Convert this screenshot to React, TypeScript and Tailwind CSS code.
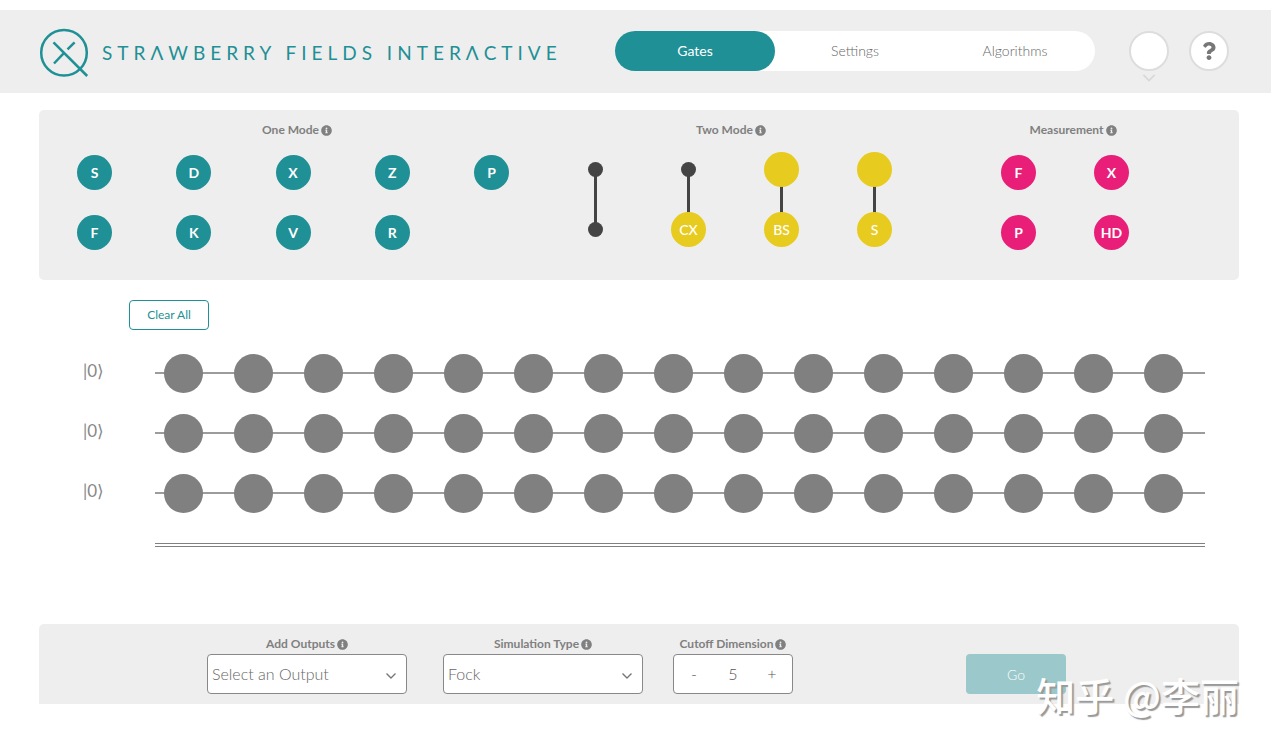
import { useState } from "react";
import type { ReactNode } from "react";
import { FaInfoCircle, FaQuestion } from "react-icons/fa";
import { clsx } from "clsx";

const tabs = ["Gates", "Settings", "Algorithms"];

// each inner array is one column of the palette
const oneMode = [["S", "F"], ["D", "K"], ["X", "V"], ["Z", "R"], ["P"]];
const measurement = [["F", "P"], ["X", "HD"]];

// an empty string is a plain disc, "dot" is a small control node
const twoMode = [
  { name: "Control phase", top: "dot", bottom: "dot" },
  { name: "Controlled X", top: "dot", bottom: "CX" },
  { name: "Beamsplitter", top: "", bottom: "BS" },
  { name: "Two-mode squeezing", top: "", bottom: "S" },
];

const SLOTS = 15;
const MODES = 3;

function Logo() {
  return (
    <svg viewBox="0 0 50 50" className="h-[50px] w-[50px] shrink-0" fill="none" stroke="#1f9095" strokeWidth="2.5">
      <circle cx="25" cy="24.8" r="22.8" />
      <path d="M14.5 14.3 48.2 48" />
      <path d="M15 35.5 24.4 25.6M28.5 21.4 35.6 14.3" />
    </svg>
  );
}

function Chevron({ className }: { className?: string }) {
  return (
    <svg viewBox="0 0 12 8" className={className} fill="none" stroke="currentColor" strokeWidth="1.4">
      <path d="M1.5 1.5 6 6l4.500-4.500" />
    </svg>
  );
}

function Caption({ children }: { children: ReactNode }) {
  return (
    <span className="flex items-center justify-center gap-[2px] text-[12px] leading-5 font-bold text-[#808080]">
      {children}
      <FaInfoCircle className="h-[11px] w-[11px]" />
    </span>
  );
}

function Gate({ label, className }: { label: string; className: string }) {
  return (
    <button
      type="button"
      className={clsx("grid h-[35px] w-[35px] place-items-center rounded-full text-[14px] font-bold text-white", className)}
    >
      {label}
    </button>
  );
}

function GateColumns({ columns, color }: { columns: string[][]; color: string }) {
  return columns.map((column) => (
    <div key={column[0]} className="flex flex-col gap-[25px]">
      {column.map((label) => (
        <Gate key={label} label={label} className={color} />
      ))}
    </div>
  ));
}

function Node({ label }: { label: string }) {
  if (label === "dot") return <span className="my-[10px] h-[15px] w-[15px] rounded-full bg-[#444]" />;
  return (
    <span className="grid h-[35px] w-[35px] place-items-center rounded-full bg-[#e8cb1f] text-[14px] font-medium text-white">
      {label}
    </span>
  );
}

function TwoModeGate({ name, top, bottom }: { name: string; top: string; bottom: string }) {
  return (
    <button type="button" aria-label={name} className="relative flex w-[35px] flex-col items-center gap-[25px]">
      <span className="absolute inset-y-4 w-[3px] bg-[#444]" />
      <span className="relative flex flex-col items-center gap-[25px]">
        <Node label={top} />
        <Node label={bottom} />
      </span>
    </button>
  );
}

function Header() {
  const [active, setActive] = useState("Gates");

  return (
    <header className="flex items-start justify-between bg-[#eee] pt-[18px] pr-[42px] pb-[15px] pl-[39px]">
      <div className="flex items-center gap-[13px]">
        <Logo />
        <h1 className="text-[19px] leading-6 tracking-[5px] whitespace-nowrap text-[#1f9095]">
          STRΛWBERRY FIELDS INTERΛCTIVE
        </h1>
      </div>
      <div className="flex items-start pt-[3px]">
        <nav className="flex rounded-full bg-white">
          {tabs.map((tab) => (
            <button
              key={tab}
              type="button"
              onClick={() => setActive(tab)}
              className={clsx(
                "h-10 w-40 rounded-full pb-[2px] text-[14px]",
                active === tab ? "bg-[#1f9095] text-white" : "font-light text-[#666]"
              )}
            >
              {tab}
            </button>
          ))}
        </nav>
        <button
          type="button"
          aria-label="Account"
          className="relative ml-[34px] h-10 w-10 rounded-full border-2 border-[#ddd] bg-white"
        >
          <Chevron className="absolute top-10 left-[10px] h-[10px] w-4 text-[#d8d8d8]" />
        </button>
        <button
          type="button"
          aria-label="Help"
          className="ml-5 grid h-10 w-10 place-items-center rounded-full border-2 border-[#ddd] bg-white text-[#777]"
        >
          <FaQuestion className="h-[18px] w-[18px]" />
        </button>
      </div>
    </header>
  );
}

function Palette() {
  return (
    <section className="mt-[17px] mr-8 ml-[39px] grid grid-cols-[129fr_88fr_83fr] rounded-[5px] bg-[#eee] pt-[10px] pb-[30px]">
      <div>
        <Caption>One Mode</Caption>
        <div className="mt-[15px] flex justify-between pr-[46px] pl-[38px]">
          <GateColumns columns={oneMode} color="bg-[#1f9095]" />
        </div>
      </div>
      <div>
        <Caption>Two Mode</Caption>
        <div className="mt-3 flex justify-between pr-[15px] pl-[23px]">
          {twoMode.map((gate) => (
            <TwoModeGate key={gate.name} {...gate} />
          ))}
        </div>
      </div>
      <div>
        <Caption>Measurement</Caption>
        <div className="mt-[15px] flex justify-between pr-[110px] pl-[94px]">
          <GateColumns columns={measurement} color="bg-[#e91e78]" />
        </div>
      </div>
    </section>
  );
}

function Circuit() {
  return (
    <section className="mt-5 pr-[66px] pl-[83px]">
      <button
        type="button"
        className="ml-[46px] h-[30px] w-20 rounded-[4px] border border-[#1f9095] text-[12px] text-[#1f9095]"
      >
        Clear All
      </button>
      <div className="mt-[13px]">
        {Array.from({ length: MODES }, (_, mode) => (
          <div key={mode} className="flex h-[60px] items-center">
            <span className="w-[72px] pb-1 text-[17px] leading-6 text-[#888]">|0⟩</span>
            <div className="relative grid flex-1 grid-cols-15">
              <span className="absolute top-[18px] h-[2px] w-full bg-[#9c9c9c]" />
              {Array.from({ length: SLOTS }, (_, slot) => (
                <span key={slot} className="relative ml-[9px] h-[39px] w-[39px] rounded-full bg-[#808080]" />
              ))}
            </div>
          </div>
        ))}
      </div>
      <div className="mt-5 ml-[72px] border-t-4 border-double border-[#808080]" />
    </section>
  );
}

function SelectField({ id, caption, options }: { id: string; caption: string; options: string[] }) {
  return (
    <div className="w-[200px]">
      <label htmlFor={id}>
        <Caption>{caption}</Caption>
      </label>
      <div className="relative">
        <select
          id={id}
          className="block h-10 w-full appearance-none rounded-[4px] border border-[#888] bg-white px-1 text-[16px] font-light text-[#666]"
        >
          {options.map((option) => (
            <option key={option}>{option}</option>
          ))}
        </select>
        <Chevron className="pointer-events-none absolute top-[18px] right-[10px] h-2 w-3 text-[#777]" />
      </div>
    </div>
  );
}

function Controls() {
  const [cutoff, setCutoff] = useState(5);

  return (
    <section className="mt-[77px] mr-8 ml-[39px] flex items-end rounded-t-[5px] bg-[#eee] pt-[10px] pr-[173px] pb-[10px] pl-[168px]">
      <SelectField id="output" caption="Add Outputs" options={["Select an Output", "Wigner function", "Fock probabilities"]} />
      <div className="ml-9">
        <SelectField id="simulation" caption="Simulation Type" options={["Fock", "Gaussian"]} />
      </div>
      <div className="ml-[30px] w-[120px]">
        <label htmlFor="cutoff">
          <Caption>Cutoff Dimension</Caption>
        </label>
        <div className="flex h-10 rounded-[4px] border border-[#888] bg-white text-[16px] font-light text-[#555]">
          <button type="button" aria-label="Decrease" className="w-10" onClick={() => setCutoff(Math.max(1, cutoff - 1))}>
            -
          </button>
          <input
            id="cutoff"
            value={cutoff}
            onChange={(e) => setCutoff(Number(e.target.value) || 0)}
            className="w-0 flex-1 text-center outline-none"
          />
          <button type="button" aria-label="Increase" className="w-10" onClick={() => setCutoff(cutoff + 1)}>
            +
          </button>
        </div>
      </div>
      <button type="button" className="ml-auto h-10 w-[100px] rounded-[4px] bg-[#9bc8ca] text-[14px] font-light text-white">
        Go
      </button>
    </section>
  );
}

export default function App() {
  return (
    <div className="relative bg-white pt-[10px] pb-11 font-[Lato,'Noto_Sans',sans-serif]">
      <Header />
      <main>
        <Palette />
        <Circuit />
        <Controls />
      </main>
      <p className="pointer-events-none absolute right-8 bottom-[29px] font-['Noto_Sans_CJK_SC',sans-serif] text-[39px] leading-[50px] font-medium whitespace-nowrap text-white [text-shadow:2px_2px_1px_#999]">
        知乎 @李丽
      </p>
    </div>
  );
}
